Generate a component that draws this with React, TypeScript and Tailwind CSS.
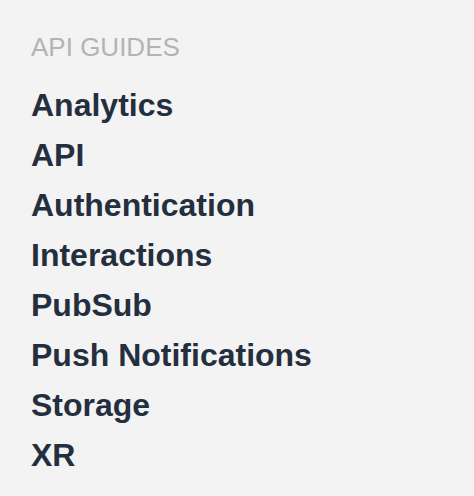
export default function App() {
  const items = [
    "Analytics",
    "API",
    "Authentication",
    "Interactions",
    "PubSub",
    "Push Notifications",
    "Storage",
    "XR",
  ];
  return (
    <div
      className="w-[474px] h-[496px] bg-[#f3f3f3] pl-[31px] pt-[28px]"
      style={{ fontFamily: '"Liberation Sans", Arial, sans-serif' }}
    >
      <div className="text-[26px] leading-[39px] text-[#b3b3b3] font-normal">API GUIDES</div>
      <ul className="mt-[13px] flex flex-col">
        {items.map((t) => (
          <li key={t} className="text-[32px] leading-[50px] font-bold text-[#232f3e]">
            {t}
          </li>
        ))}
      </ul>
    </div>
  );
}
